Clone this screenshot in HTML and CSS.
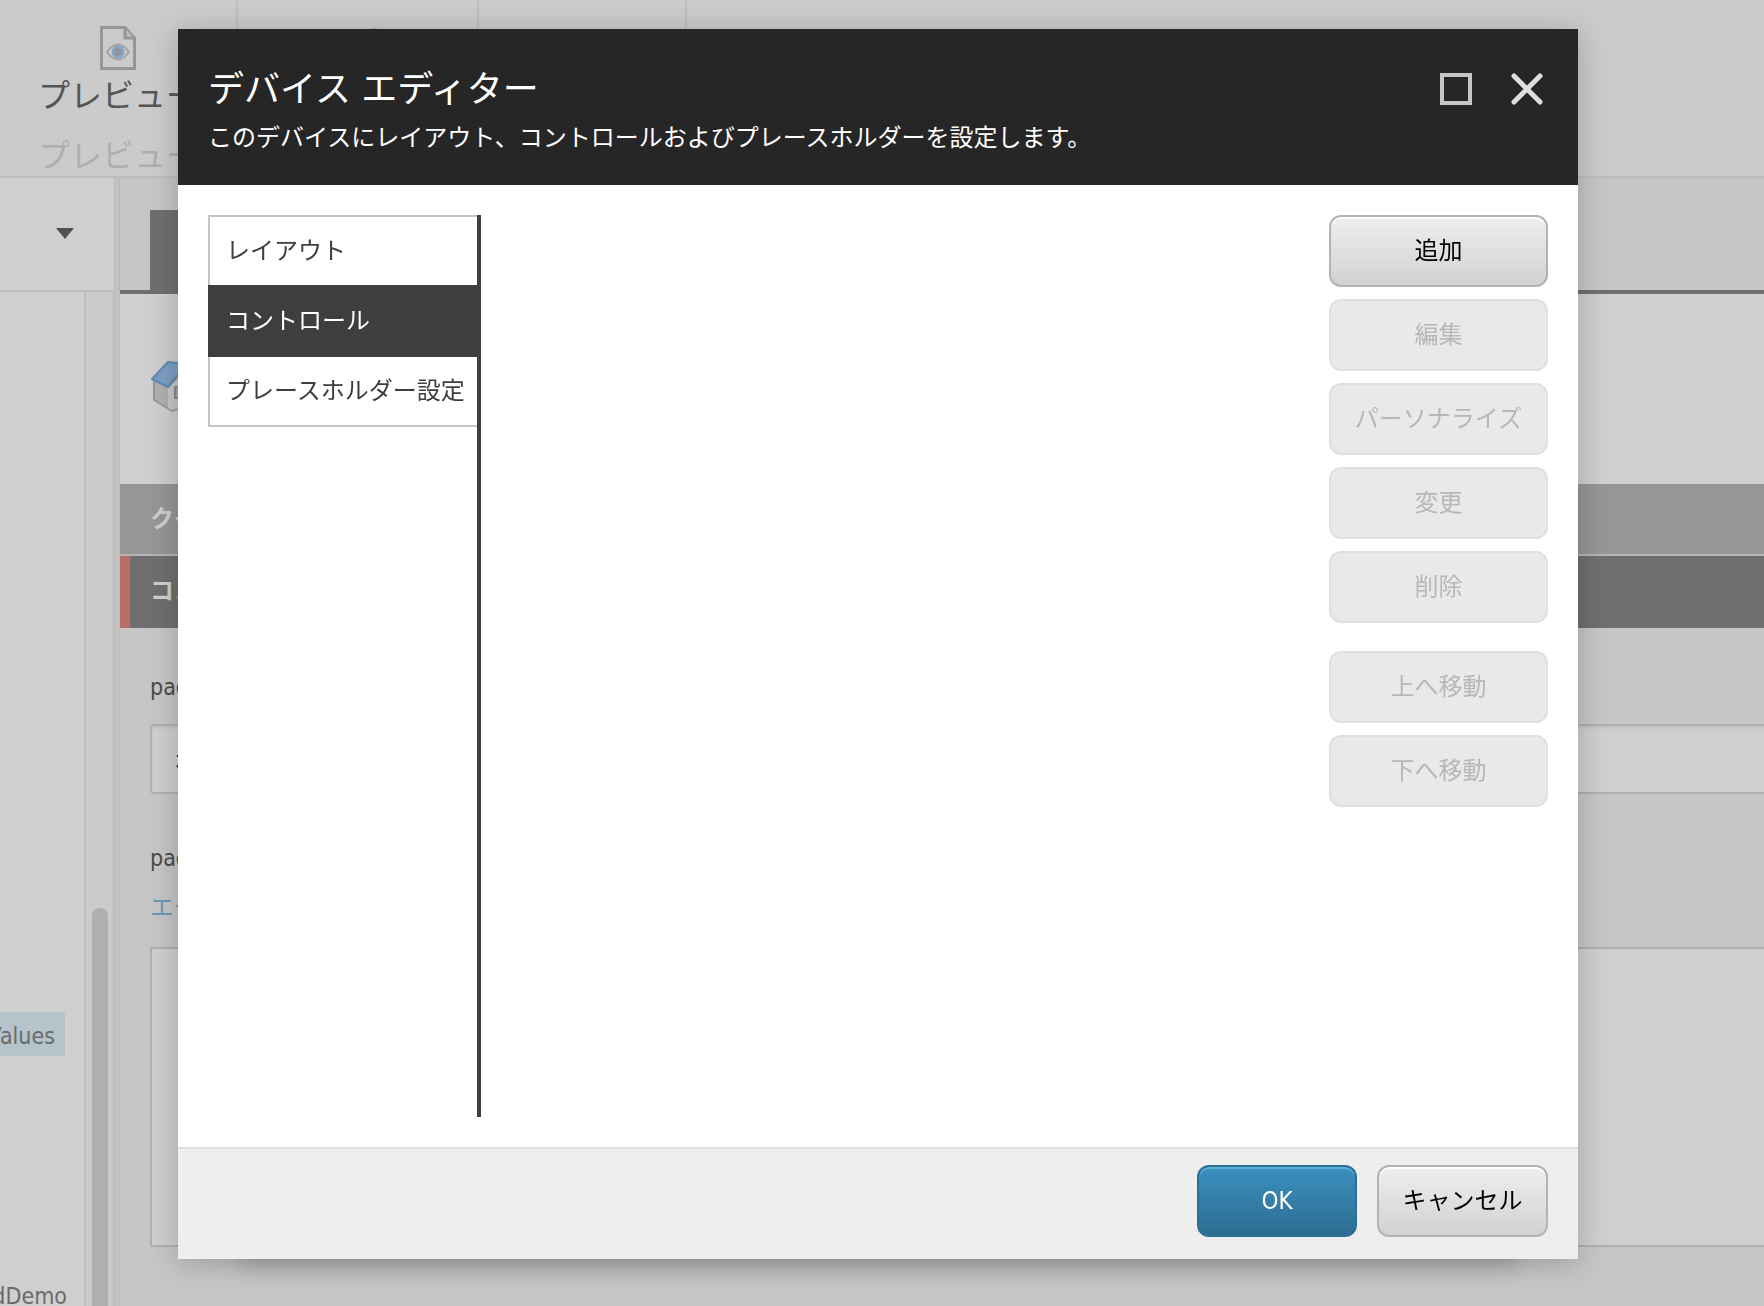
FILE: index.html
```html
<!DOCTYPE html>
<html lang="ja">
<head>
<meta charset="utf-8">
<meta name="viewport" content="width=device-width, initial-scale=1">
<title>デバイス エディター</title>
<link rel="stylesheet" href="styles.css">
</head>
<body>
<div class="app">
  <header class="ribbon">
    <section class="chunk chunk-preview">
      <svg class="chunk-icon" viewBox="0 0 36 44" aria-hidden="true">
        <path d="M1.500 1.500H25L34.500 12V42.500H1.500Z" fill="#cbcbcb" stroke="#969696" stroke-width="3"/>
        <path d="M25 2V12H34" fill="#bdbdbd" stroke="#969696" stroke-width="3"/>
        <path d="M7 26Q18 11 29 26Q18 41 7 26Z" fill="#cfcfcf" stroke="#a2a2a2" stroke-width="2"/>
        <circle cx="18" cy="26" r="5" fill="#8f949d" stroke="#86a2c6" stroke-width="3"/>
      </svg>
      <span class="chunk-label">プレビュー</span>
      <span class="chunk-caption">プレビュー</span>
    </section>
    <section class="chunk chunk-medium">
      <svg class="chunk-mark" viewBox="0 0 8 8" aria-hidden="true"><circle cx="4" cy="4" r="4" fill="#c9a36a"/></svg>
    </section>
    <section class="chunk chunk-small"></section>
  </header>
  <div class="workspace">
    <aside class="sidebar">
      <div class="sidebar-top">
        <svg class="caret" viewBox="0 0 18 11" aria-hidden="true"><path d="M0 0H18L9 11Z" fill="#505050"/></svg>
      </div>
      <div class="sidebar-body">
        <div class="tree">
          <div class="node node-selected"><span>Values</span></div>
          <div class="node"><span>StandardDemo</span></div>
        </div>
        <div class="scroll-track"><div class="scroll-thumb"></div></div>
      </div>
    </aside>
    <div class="splitter"></div>
    <main class="content">
      <div class="tabs"><div class="tab"></div></div>
      <div class="item-head">
        <svg class="house" viewBox="0 0 52 54" aria-hidden="true">
          <path d="M4 19L18 27L34 13L50 25V42L22 51L4 40Z" fill="#b0b0b0" stroke="#999" stroke-width="2"/>
          <path d="M18 28L34 13L50 25V42L22 50L18 48Z" fill="#c6c6c6"/>
          <rect x="25" y="27" width="12" height="11" fill="#a9a9a9" stroke="#8c8c8c" stroke-width="2"/>
          <path d="M2 19L18 2L37 4L18 27Z" fill="#7c9fc4" stroke="#6189b3" stroke-width="2" stroke-linejoin="round"/>
        </svg>
      </div>
      <h2 class="band">クイック情報</h2>
      <h2 class="band band-active">コンテンツ</h2>
      <div class="fields">
        <label class="field-label" for="page-title">pageTitle:</label>
        <input class="field-input" id="page-title" type="text" value="ホーム">
        <label class="field-label" for="page-text">pageText:</label>
        <a class="field-link" href="#editor">エディターの表示</a>
        <textarea class="field-area" id="page-text"></textarea>
      </div>
    </main>
  </div>
</div>

<div class="overlay">
  <section class="dialog" role="dialog" aria-labelledby="dialog-title">
    <header class="dialog-header">
      <div class="dialog-heading">
        <h1 class="dialog-title" id="dialog-title">デバイス エディター</h1>
        <p class="dialog-text">このデバイスにレイアウト、コントロールおよびプレースホルダーを設定します。</p>
      </div>
      <div class="window-tools">
        <button class="window-tool" type="button" aria-label="最大化">
          <svg viewBox="0 0 32 32"><rect x="2" y="2" width="28" height="28" fill="none" stroke="#c6c6c6" stroke-width="4"/></svg>
        </button>
        <button class="window-tool" type="button" aria-label="閉じる">
          <svg viewBox="0 0 32 32"><path d="M3 3L29 29M29 3L3 29" fill="none" stroke="#dedede" stroke-width="5" stroke-linecap="round"/></svg>
        </button>
      </div>
    </header>
    <div class="dialog-body">
      <nav class="menu">
        <button class="menu-item" type="button">レイアウト</button>
        <button class="menu-item menu-item-active" type="button">コントロール</button>
        <button class="menu-item" type="button">プレースホルダー設定</button>
      </nav>
      <div class="actions">
        <button class="btn" type="button">追加</button>
        <button class="btn" type="button" disabled>編集</button>
        <button class="btn" type="button" disabled>パーソナライズ</button>
        <button class="btn" type="button" disabled>変更</button>
        <button class="btn" type="button" disabled>削除</button>
        <button class="btn btn-group" type="button" disabled>上へ移動</button>
        <button class="btn" type="button" disabled>下へ移動</button>
      </div>
    </div>
    <footer class="dialog-footer">
      <button class="btn btn-primary" type="button">OK</button>
      <button class="btn btn-cancel" type="button">キャンセル</button>
    </footer>
  </section>
</div>
</body>
</html>
```
FILE: styles.css
```css
* { box-sizing: border-box; }

body {
  margin: 0;
  font-family: "DejaVu Sans Condensed", "Noto Sans CJK JP", sans-serif;
  font-size: 24px;
  line-height: 36px;
  color: #4a4a4a;
  background: #c6c6c6;
}

button, input, textarea { font: inherit; }
h1, h2, p { margin: 0; }

.app {
  display: flex;
  flex-direction: column;
  height: 100vh;
  overflow: hidden;
}

/* Ribbon */
.ribbon {
  display: flex;
  flex: none;
  height: 178px;
  background: #cbcbcb;
  border-bottom: 2px solid #bdbdbd;
}
.chunk { border-right: 2px solid #bfbfbf; }
.chunk-preview {
  display: flex;
  flex-direction: column;
  align-items: center;
  width: 238px;
  padding-top: 26px;
  font-size: 32px;
}
.chunk-medium { width: 241px; padding: 28px 0 0 132px; }
.chunk-small { width: 208px; }
.chunk-icon { flex: none; width: 36px; height: 44px; }
.chunk-mark { display: block; width: 8px; height: 8px; }
.chunk-label { flex: none; line-height: 52px; color: #555; }
.chunk-caption { flex: none; height: 54px; line-height: 68px; color: #afafaf; }

/* Sidebar */
.workspace { display: flex; flex: 1; min-height: 0; }
.sidebar {
  display: flex;
  flex-direction: column;
  width: 116px;
  background: #cfcfcf;
  border-right: 2px solid #bdbdbd;
}
.sidebar-top {
  display: flex;
  flex: none;
  justify-content: flex-end;
  height: 114px;
  padding: 50px 40px 0 0;
  border-bottom: 2px solid #bdbdbd;
}
.caret { width: 18px; height: 11px; }
.sidebar-body { display: flex; flex: 1; min-height: 0; }
.tree {
  flex: 1;
  min-width: 0;
  padding-top: 720px;
  overflow: hidden;
  border-right: 2px solid #bfbfbf;
}
.node {
  display: flex;
  justify-content: flex-end;
  width: 65px;
  height: 44px;
  margin-bottom: 216px;
  padding-right: 10px;
  font-size: 23px;
  line-height: 48px;
  color: #6a6a6a;
}
.node + .node { width: 67px; padding-right: 0; }
.node-selected { background: #b5c3cb; }
.scroll-track {
  width: 28px;
  padding: 616px 6px 0;
  background: #cbcbcb;
  border-right: 2px solid #c3c3c3;
}
.scroll-thumb {
  width: 16px;
  height: 100%;
  background: #afafaf;
  border-radius: 8px 8px 0 0;
}
.splitter {
  width: 4px;
  background: #c6c6c6;
  border-right: 2px solid #bdbdbd;
}

/* Content editor */
.content { flex: 1; min-width: 0; }
.tabs {
  display: flex;
  align-items: flex-end;
  height: 116px;
  padding-left: 30px;
  border-bottom: 4px solid #6f6f6f;
}
.tab { width: 180px; height: 80px; background: #6f6f6f; }
.item-head {
  height: 190px;
  padding: 66px 30px 0;
  background: #cfcfcf;
}
.house { width: 52px; height: 54px; }
.band {
  height: 72px;
  padding-left: 30px;
  font-size: 24px;
  line-height: 70px;
  color: #cfcfcf;
  background: #969696;
  border-bottom: 2px solid #b5b5b5;
}
.band-active {
  padding-left: 20px;
  background: #6f6f6f;
  border-bottom: 0;
  border-left: 10px solid #b96d65;
}
.fields {
  display: flex;
  flex-direction: column;
  align-items: stretch;
  padding: 41px 0 0 30px;
}
.field-label { height: 36px; font-size: 23px; }
.field-input {
  height: 70px;
  margin: 19px -8px 46px 0;
  padding: 0 22px;
  color: #444;
  background: #cfcfcf;
  border: 2px solid #b0b0b0;
  border-radius: 4px;
  box-shadow: inset 0 2px 3px #c2c2c2;
}
.field-link { margin: 14px 0 21px; color: #6c9bb4; text-decoration: none; }
.field-area {
  height: 300px;
  margin-right: -8px;
  background: #cfcfcf;
  border: 2px solid #b0b0b0;
  resize: none;
}

/* Dialog */
.overlay {
  position: fixed;
  inset: 0;
  display: flex;
  padding: 29px 186px 47px 178px;
}
.dialog {
  display: flex;
  flex: 1;
  flex-direction: column;
  min-width: 0;
  background: #fff;
  box-shadow: 0 4px 28px rgba(0, 0, 0, .22), 0 64px 24px -60px rgba(0, 0, 0, .22);
}
.dialog-header {
  display: flex;
  justify-content: space-between;
  height: 156px;
  padding: 36px 35px 0 30px;
  color: #fff;
  background: #262626;
}
.dialog-title { font-size: 36px; font-weight: 400; line-height: 50px; }
.dialog-text { line-height: 46px; }
.window-tools { display: flex; gap: 39px; padding-top: 8px; }
.window-tool {
  width: 32px;
  height: 32px;
  padding: 0;
  background: none;
  border: 0;
}
.window-tool svg { display: block; width: 32px; height: 32px; }
.dialog-body {
  display: flex;
  flex: 1;
  justify-content: space-between;
  min-height: 0;
  padding: 30px;
}
.menu {
  display: flex;
  flex-direction: column;
  width: 273px;
  border-right: 4px solid #3e3e3e;
}
.menu-item {
  height: 70px;
  padding: 0 0 0 16px;
  color: #3e3e3e;
  text-align: left;
  white-space: nowrap;
  background: #fff;
  border: 2px solid #c4c4c4;
  border-width: 2px 0 0 2px;
}
.menu-item:last-child { border-width: 0 0 2px 2px; }
.menu-item-active {
  height: 72px;
  color: #fff;
  background: #3e3e3e;
  border-width: 0 0 0 2px;
  border-color: #3e3e3e;
}
.actions { display: flex; flex-direction: column; gap: 12px; width: 219px; }
.btn {
  height: 72px;
  padding: 0;
  color: #000;
  background: linear-gradient(#eee, #d2d2d2);
  border: 2px solid #b3b3b3;
  border-radius: 12px;
  box-shadow: inset 0 2px 0 #fff;
}
.btn:disabled {
  color: #b7b7b7;
  background: #e9e9e9;
  border-color: #e0e0e0;
  box-shadow: none;
}
.btn-group { margin-top: 16px; }
.dialog-footer {
  display: flex;
  justify-content: flex-end;
  gap: 20px;
  padding: 16px 30px 22px;
  background: #eee;
  border-top: 2px solid #dfdfdf;
}
.btn-primary {
  width: 160px;
  color: #fff;
  background: linear-gradient(#3a90be, #2d6e92);
  border-color: #2c6f93;
  box-shadow: inset 0 2px 0 #5fb0d9;
}
.btn-cancel { width: 171px; }
```
